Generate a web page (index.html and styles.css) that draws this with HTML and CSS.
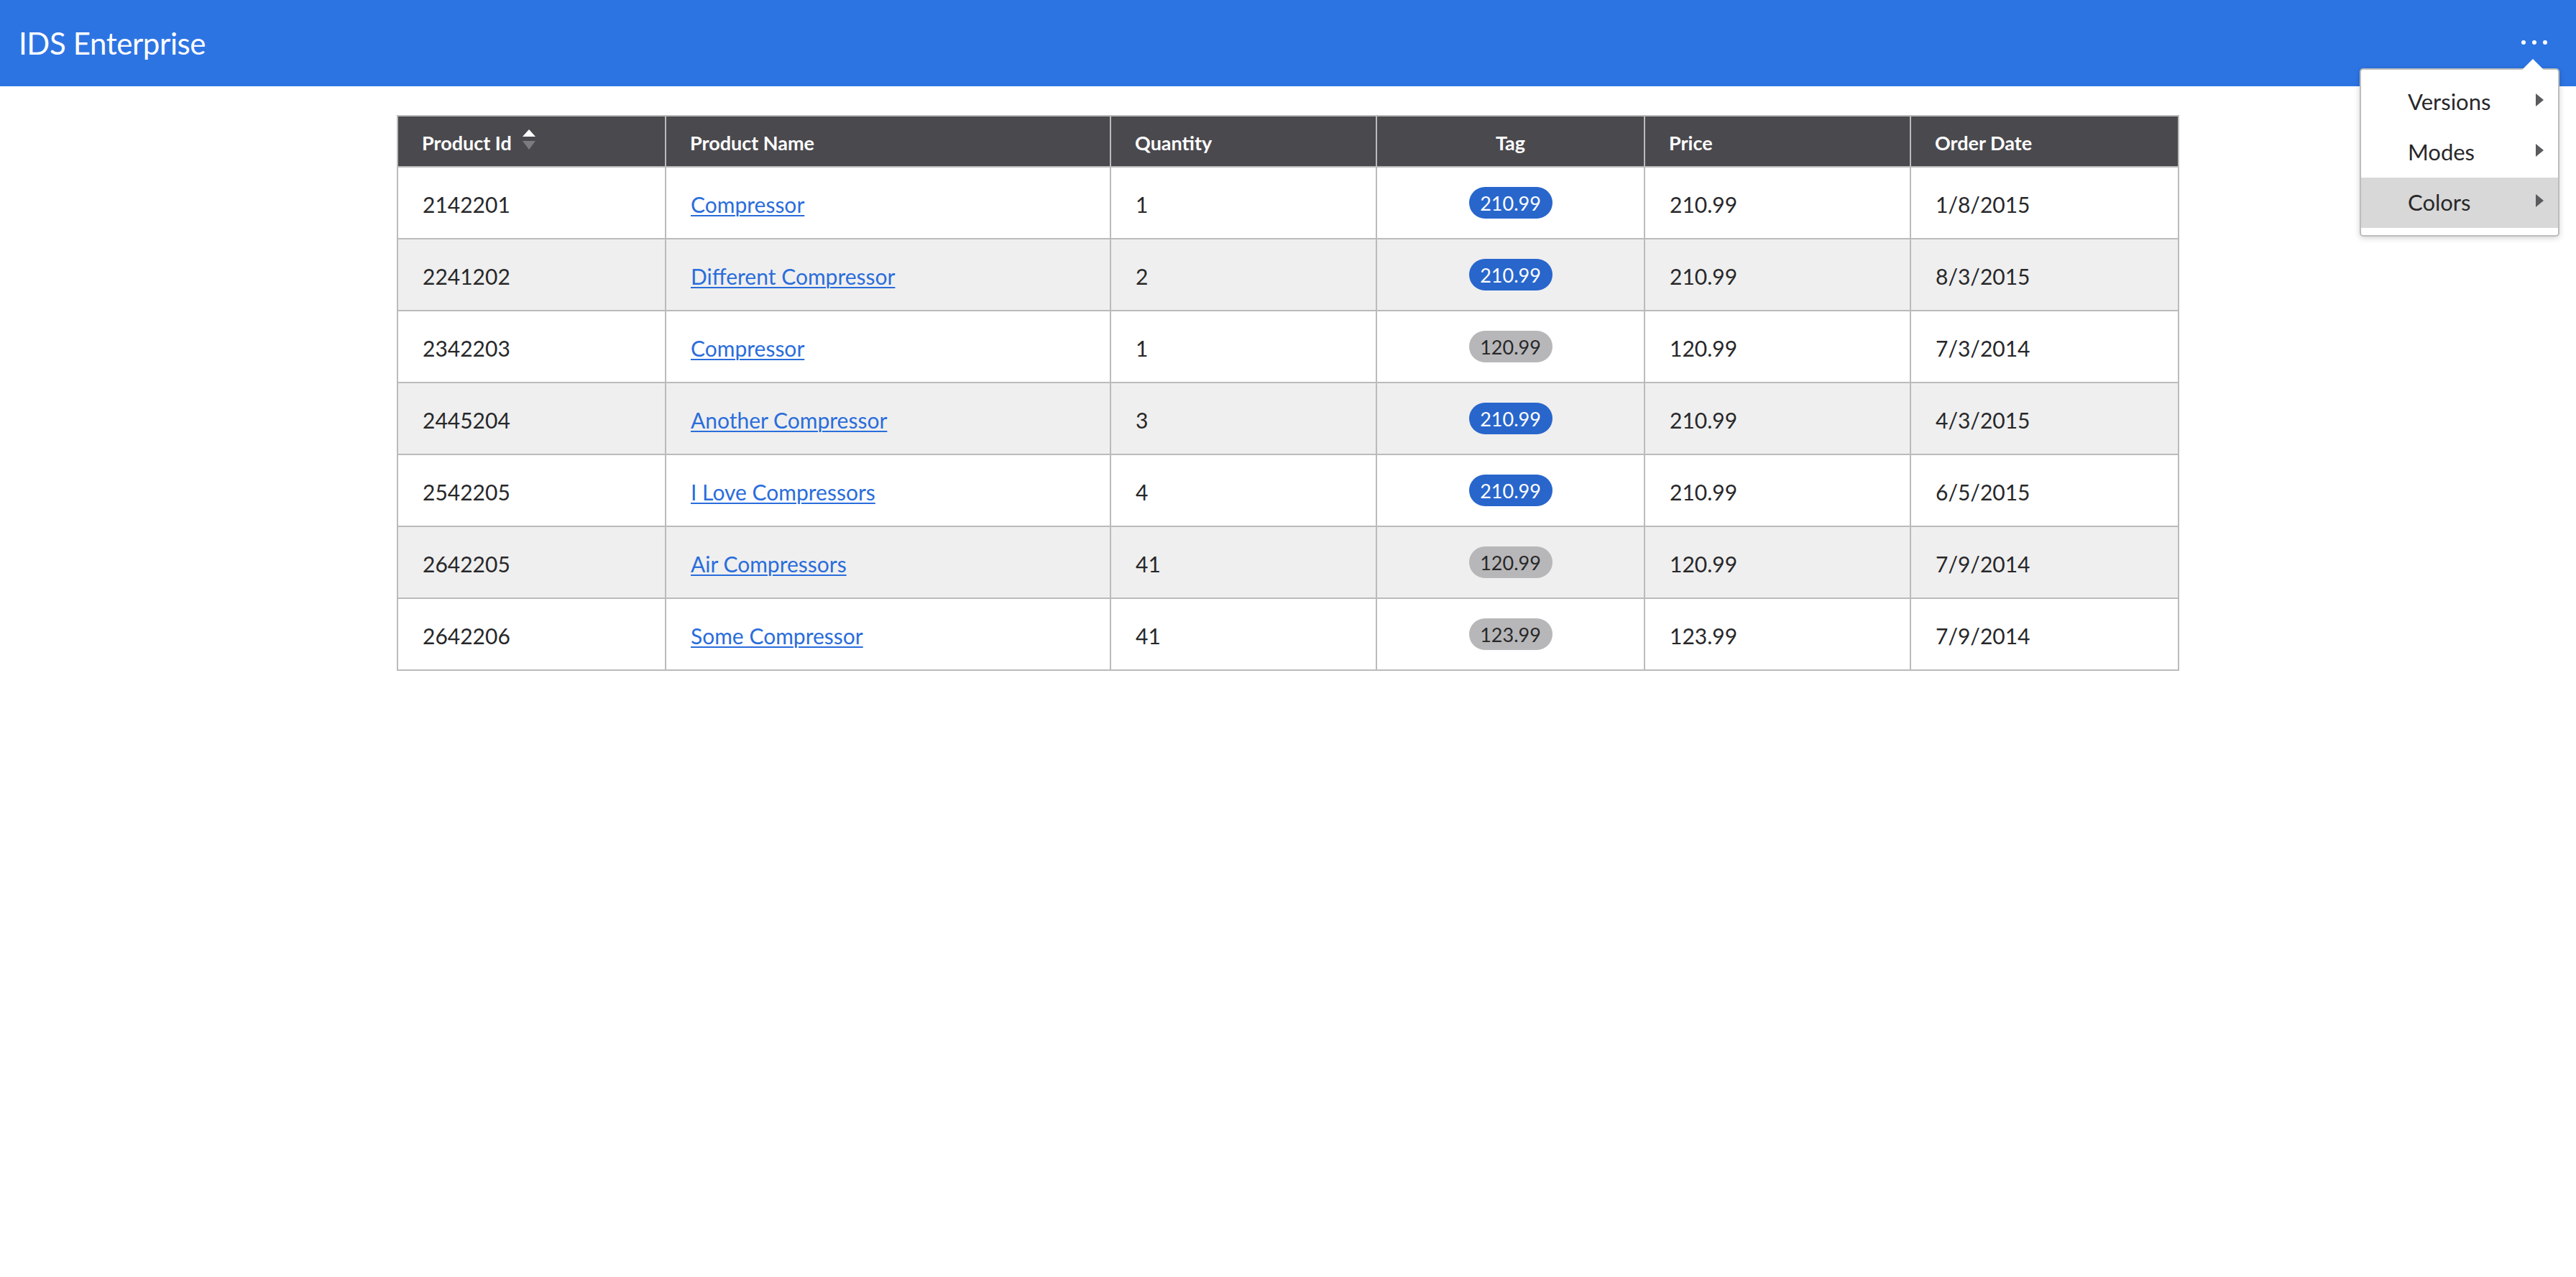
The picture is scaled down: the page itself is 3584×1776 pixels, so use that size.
FILE: index.html
```html
<!DOCTYPE html>
<html lang="en">
<head>
<meta charset="utf-8">
<title>IDS Enterprise</title>
<link rel="stylesheet" href="styles.css">
</head>
<body>
<header class="app-header">
  <h1 class="app-title">IDS Enterprise</h1>
  <button class="more-btn" aria-label="More">
    <span class="dot"></span><span class="dot"></span><span class="dot"></span>
  </button>
  <div class="popupmenu">
    <span class="popup-arrow"></span>
    <ul class="menu-list">
      <li class="menu-item">Versions<span class="sub-arrow"></span></li>
      <li class="menu-item">Modes<span class="sub-arrow"></span></li>
      <li class="menu-item is-hover">Colors<span class="sub-arrow"></span></li>
    </ul>
  </div>
</header>
<main class="page">
  <table class="datagrid">
    <colgroup>
      <col class="c1"><col class="c2"><col class="c3"><col class="c4"><col class="c5"><col class="c6">
    </colgroup>
    <thead>
      <tr>
        <th><span class="th-wrap">Product Id<span class="sort"><span class="sort-up"></span><span class="sort-down"></span></span></span></th>
        <th>Product Name</th>
        <th>Quantity</th>
        <th class="center">Tag</th>
        <th>Price</th>
        <th>Order Date</th>
      </tr>
    </thead>
    <tbody>
      <tr><td>2142201</td><td><a href="#">Compressor</a></td><td>1</td><td class="center"><span class="tag tag-blue">210.99</span></td><td>210.99</td><td>1/8/2015</td></tr>
      <tr class="alt"><td>2241202</td><td><a href="#">Different Compressor</a></td><td>2</td><td class="center"><span class="tag tag-blue">210.99</span></td><td>210.99</td><td>8/3/2015</td></tr>
      <tr><td>2342203</td><td><a href="#">Compressor</a></td><td>1</td><td class="center"><span class="tag tag-gray">120.99</span></td><td>120.99</td><td>7/3/2014</td></tr>
      <tr class="alt"><td>2445204</td><td><a href="#">Another Compressor</a></td><td>3</td><td class="center"><span class="tag tag-blue">210.99</span></td><td>210.99</td><td>4/3/2015</td></tr>
      <tr><td>2542205</td><td><a href="#">I Love Compressors</a></td><td>4</td><td class="center"><span class="tag tag-blue">210.99</span></td><td>210.99</td><td>6/5/2015</td></tr>
      <tr class="alt"><td>2642205</td><td><a href="#">Air Compressors</a></td><td>41</td><td class="center"><span class="tag tag-gray">120.99</span></td><td>120.99</td><td>7/9/2014</td></tr>
      <tr><td>2642206</td><td><a href="#">Some Compressor</a></td><td>41</td><td class="center"><span class="tag tag-gray">123.99</span></td><td>123.99</td><td>7/9/2014</td></tr>
    </tbody>
  </table>
</main>
</body>
</html>
```

FILE: styles.css
```css
* { box-sizing: border-box; }
html, body {
  margin: 0;
  padding: 0;
  background: #ffffff;
  font-family: "Lato", "Noto Sans", "Liberation Sans", sans-serif;
  color: #28282a;
}

.app-header {
  position: relative;
  height: 120px;
  background: #2d74e3;
  display: flex;
  align-items: center;
  justify-content: space-between;
  padding: 0 40px 0 26px;
}
.app-title {
  margin: 0;
  font-size: 42px;
  font-weight: 400;
  color: #ffffff;
  letter-spacing: -0.4px;
}
.more-btn {
  display: flex;
  gap: 9px;
  background: none;
  border: 0;
  padding: 0;
  margin-top: -2px;
  cursor: pointer;
}
.dot {
  width: 6px;
  height: 6px;
  border-radius: 50%;
  background: #ffffff;
}

.popupmenu {
  position: absolute;
  top: 95px;
  right: 23px;
  width: 278px;
  background: #ffffff;
  border: 2px solid #bdbdbd;
  border-radius: 5px;
  box-shadow: 0 2px 8px rgba(0, 0, 0, 0.18);
  padding: 10px 0;
  z-index: 10;
}
.popup-arrow {
  position: absolute;
  top: -15px;
  right: 20px;
  width: 0;
  height: 0;
  border-left: 15px solid transparent;
  border-right: 15px solid transparent;
  border-bottom: 15px solid #ffffff;
}
.menu-list {
  list-style: none;
  margin: 0;
  padding: 0;
}
.menu-item {
  position: relative;
  height: 70px;
  display: flex;
  align-items: center;
  padding-left: 65px;
  padding-bottom: 3px;
  font-size: 31px;
  color: #28282a;
}
.menu-item.is-hover {
  background: #d8d8d8;
}
.sub-arrow {
  position: absolute;
  right: 20px;
  top: 23px;
  width: 0;
  height: 0;
  border-top: 9px solid transparent;
  border-bottom: 9px solid transparent;
  border-left: 11px solid #5a5a5f;
}

.page {
  padding-top: 40px;
}
.datagrid {
  width: 2478px;
  margin: 0 auto;
  border-collapse: collapse;
  table-layout: fixed;
  border: 2px solid #bbbbbb;
}
.c1 { width: 373px; }
.c2 { width: 619px; }
.c3 { width: 370px; }
.c4 { width: 373px; }
.c5 { width: 370px; }
.c6 { width: 373px; }

.datagrid th {
  height: 71px;
  background: #4a494e;
  color: #ffffff;
  font-size: 27px;
  font-weight: 700;
  text-align: left;
  padding: 3px 0 0 33px;
  border-left: 2px solid #bbbbbb;
  border-right: 2px solid #bbbbbb;
  vertical-align: middle;
}
.datagrid th.center { text-align: center; padding-left: 0; }
.th-wrap {
  display: inline-flex;
  align-items: center;
}
.sort {
  display: inline-flex;
  flex-direction: column;
  gap: 6px;
  margin-left: 15px;
  margin-top: -8px;
}
.sort-up {
  width: 0; height: 0;
  border-left: 9.5px solid transparent;
  border-right: 9.5px solid transparent;
  border-bottom: 10px solid #ffffff;
}
.sort-down {
  width: 0; height: 0;
  border-left: 9.5px solid transparent;
  border-right: 9.5px solid transparent;
  border-top: 12px solid #7b7b80;
}

.datagrid td {
  height: 100px;
  font-size: 30px;
  color: #28282a;
  padding: 4px 0 0 34px;
  border: 2px solid #bbbbbb;
  vertical-align: middle;
}
.datagrid td.center { text-align: center; padding-left: 0; padding-top: 0; }
.datagrid tr.alt td { background: #efefef; }
.datagrid a {
  color: #2a6ddb;
  text-decoration: underline;
  text-underline-offset: 3px;
  text-decoration-thickness: 2px;
}
.tag {
  display: inline-block;
  width: 116px;
  height: 44px;
  line-height: 45px;
  border-radius: 22px;
  font-size: 27px;
  text-align: center;
}
.tag-blue { background: #2866cc; color: #ffffff; }
.tag-gray { background: #b7b7b9; color: #28282a; }
```
